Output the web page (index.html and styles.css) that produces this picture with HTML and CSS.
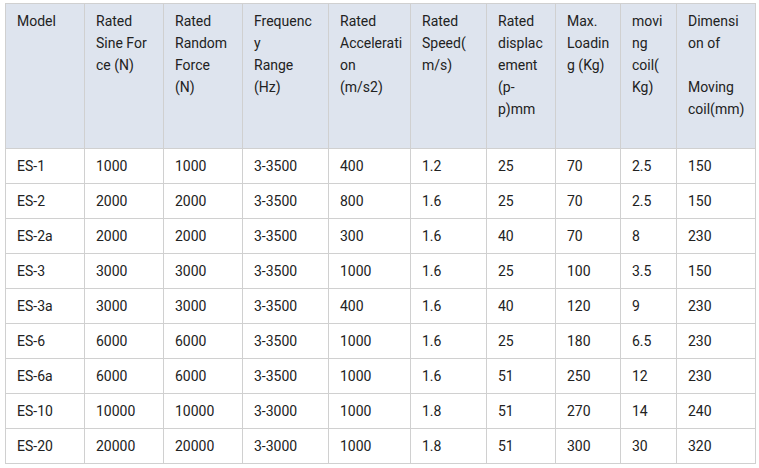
FILE: index.html
```html
<!DOCTYPE html>
<html>
<head>
<meta charset="utf-8">
<link rel="stylesheet" href="styles.css">
</head>
<body>
<table class="spec">
<colgroup>
<col class="c1"><col class="c2"><col class="c3"><col class="c4"><col class="c5"><col class="c6"><col class="c7"><col class="c8"><col class="c9"><col class="c10">
</colgroup>
<thead>
<tr>
<th>Model</th>
<th>Rated<br>Sine For<br>ce (N)</th>
<th>Rated<br>Random<br>Force<br>(N)</th>
<th>Frequenc<br>y<br>Range<br>(Hz)</th>
<th>Rated<br>Accelerati<br>on<br>(m/s2)</th>
<th>Rated<br>Speed(<br>m/s)</th>
<th>Rated<br>displac<br>ement<br>(p-<br>p)mm</th>
<th>Max.<br>Loadin<br>g (Kg)</th>
<th>movi<br>ng<br>coil(<br>Kg)</th>
<th>Dimensi<br>on of<br><br>Moving<br>coil(mm)</th>
</tr>
</thead>
<tbody>
<tr><td>ES-1</td><td>1000</td><td>1000</td><td>3-3500</td><td>400</td><td>1.2</td><td>25</td><td>70</td><td>2.5</td><td>150</td></tr>
<tr><td>ES-2</td><td>2000</td><td>2000</td><td>3-3500</td><td>800</td><td>1.6</td><td>25</td><td>70</td><td>2.5</td><td>150</td></tr>
<tr><td>ES-2a</td><td>2000</td><td>2000</td><td>3-3500</td><td>300</td><td>1.6</td><td>40</td><td>70</td><td>8</td><td>230</td></tr>
<tr><td>ES-3</td><td>3000</td><td>3000</td><td>3-3500</td><td>1000</td><td>1.6</td><td>25</td><td>100</td><td>3.5</td><td>150</td></tr>
<tr><td>ES-3a</td><td>3000</td><td>3000</td><td>3-3500</td><td>400</td><td>1.6</td><td>40</td><td>120</td><td>9</td><td>230</td></tr>
<tr><td>ES-6</td><td>6000</td><td>6000</td><td>3-3500</td><td>1000</td><td>1.6</td><td>25</td><td>180</td><td>6.5</td><td>230</td></tr>
<tr><td>ES-6a</td><td>6000</td><td>6000</td><td>3-3500</td><td>1000</td><td>1.6</td><td>51</td><td>250</td><td>12</td><td>230</td></tr>
<tr><td>ES-10</td><td>10000</td><td>10000</td><td>3-3000</td><td>1000</td><td>1.8</td><td>51</td><td>270</td><td>14</td><td>240</td></tr>
<tr><td>ES-20</td><td>20000</td><td>20000</td><td>3-3000</td><td>1000</td><td>1.8</td><td>51</td><td>300</td><td>30</td><td>320</td></tr>
</tbody>
</table>
</body>
</html>
```
FILE: styles.css
```css
html, body {
  margin: 0;
  background: #ffffff;
}
body {
  padding: 3px 5px;
  font-family: Roboto, "Liberation Sans", sans-serif;
  font-size: 14px;
  color: #222222;
}
.spec {
  border-collapse: collapse;
  table-layout: fixed;
  width: 750px;
}
.spec th, .spec td {
  border: 1px solid #d0d0d0;
  padding: 0 6px 0 11px;
  text-align: left;
  font-weight: normal;
  line-height: 22px;
  white-space: nowrap;
  overflow: hidden;
}
.spec thead th {
  background: #dee4ee;
  height: 143px;
  vertical-align: top;
  padding-top: 6px;
  box-sizing: border-box;
}
.spec thead tr {
  height: 145px;
}
.spec tbody td {
  height: 35px;
  vertical-align: middle;
  box-sizing: border-box;
}
.c1 { width: 79px; }
.c2 { width: 79px; }
.c3 { width: 79px; }
.c4 { width: 86px; }
.c5 { width: 82px; }
.c6 { width: 76px; }
.c7 { width: 69px; }
.c8 { width: 65px; }
.c9 { width: 56px; }
.c10 { width: 79px; }
```
